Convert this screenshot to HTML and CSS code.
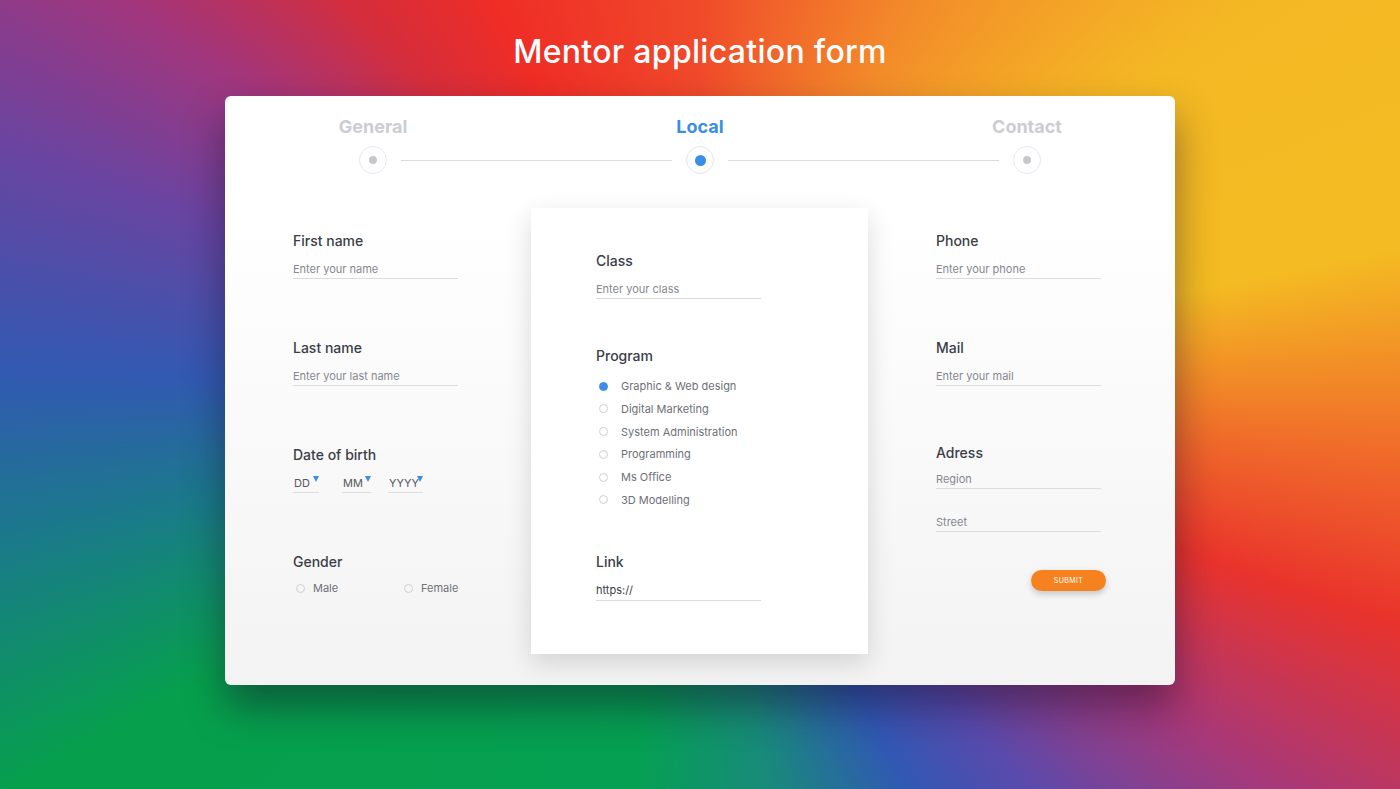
FILE: index.html
```html
<!DOCTYPE html>
<html lang="en">
<head>
    <meta charset="UTF-8">
    <meta name="viewport" content="width=device-width, initial-scale=1.0">
    <title>Mentor application form</title>
    <link rel="stylesheet" href="styles.css">
</head>
<body>

    <h1>Mentor application form</h1>

    <div class="card">
        <div class="steps">
            <div class="step">
                <span class="step-label">General</span>
                <span class="step-dot"><i></i></span>
            </div>
            <div class="step-line"></div>
            <div class="step active">
                <span class="step-label">Local</span>
                <span class="step-dot"><i></i></span>
            </div>
            <div class="step-line"></div>
            <div class="step">
                <span class="step-label">Contact</span>
                <span class="step-dot"><i></i></span>
            </div>
        </div>

        <div class="form-body">
            <!-- left column -->
            <div class="col col-left">
                <div class="field">
                    <label>First name</label>
                    <div class="input">Enter your name</div>
                </div>
                <div class="field">
                    <label>Last name</label>
                    <div class="input">Enter your last name</div>
                </div>
                <div class="field">
                    <label>Date of birth</label>
                    <div class="dates">
                        <span class="select dd">DD<b></b></span>
                        <span class="select mm">MM<b></b></span>
                        <span class="select yy">YYYY<b></b></span>
                    </div>
                </div>
                <div class="field">
                    <label>Gender</label>
                    <div class="gender">
                        <span class="radio"><i></i>Male</span>
                        <span class="radio"><i></i>Female</span>
                    </div>
                </div>
            </div>

            <!-- center panel -->
            <div class="col col-center">
                <div class="field">
                    <label>Class</label>
                    <div class="input">Enter your class</div>
                </div>
                <div class="field program">
                    <label>Program</label>
                    <ul class="options">
                        <li class="radio checked"><i></i>Graphic &amp; Web design</li>
                        <li class="radio"><i></i>Digital Marketing</li>
                        <li class="radio"><i></i>System Administration</li>
                        <li class="radio"><i></i>Programming</li>
                        <li class="radio"><i></i>Ms Office</li>
                        <li class="radio"><i></i>3D Modelling</li>
                    </ul>
                </div>
                <div class="field">
                    <label>Link</label>
                    <div class="input filled">https://</div>
                </div>
            </div>

            <!-- right column -->
            <div class="col col-right">
                <div class="field">
                    <label>Phone</label>
                    <div class="input">Enter your phone</div>
                </div>
                <div class="field">
                    <label>Mail</label>
                    <div class="input">Enter your mail</div>
                </div>
                <div class="field address">
                    <label>Adress</label>
                    <div class="input">Region</div>
                    <div class="input">Street</div>
                </div>
                <div class="submit-row">
                    <a class="submit">SUBMIT</a>
                </div>
            </div>
        </div>
    </div>

</body>
</html>
```

FILE: styles.css
```css
body {
    font-family: Inter, "Open Sans", sans-serif;
    margin: 0;
    padding: 0;
    height: 789px;
    overflow: hidden;
    display: flex;
    flex-direction: column;
    align-items: center;
    background: conic-gradient(from 0deg at 50% 50%,
        #f04a2a 0deg, #f3892a 28deg, #f4b824 55deg, #f4bc22 78deg,
        #f06a2a 95deg, #e9332c 108deg, #a83878 124deg, #5a4aac 140deg,
        #3158b4 152deg, #188a7a 170deg, #05a052 190deg, #06a04c 240deg,
        #1a7a8a 258deg, #3259b2 272deg, #6a44a0 290deg, #a0367e 304deg,
        #d42d3c 318deg, #ef2d26 332deg, #f04a2a 360deg);
}
h1 {
    color: #fff;
    font-size: 32px;
    font-weight: 500;
    line-height: 40px;
    margin: 32px 0 0;
    letter-spacing: 0.3px;
}
.card {
    width: 950px;
    height: 589px;
    margin-top: 24px;
    border-radius: 6px;
    background: linear-gradient(#ffffff 20%, #f3f3f3);
    box-shadow: 0 22px 40px rgba(20, 10, 40, 0.45);
    display: flex;
    flex-direction: column;
}

/* steps */
.steps {
    display: flex;
    flex: none;
    padding: 20px 134px 0;
    height: 112px;
    box-sizing: border-box;
}
.step {
    width: 28px;
    display: flex;
    flex-direction: column;
    align-items: center;
}
.step-label {
    font-size: 18px;
    font-weight: 700;
    line-height: 22px;
    color: #cbcdd2;
    white-space: nowrap;
    margin-bottom: 8px;
}
.step-dot {
    width: 28px;
    height: 28px;
    box-sizing: border-box;
    border: 1px solid #e6e8ee;
    border-radius: 50%;
    background: #fff;
    display: flex;
    align-items: center;
    justify-content: center;
}
.step-dot i {
    width: 8px;
    height: 8px;
    border-radius: 50%;
    background: #c6c8cd;
}
.step.active .step-label {
    color: #3a8ee6;
}
.step.active .step-dot i {
    width: 11px;
    height: 11px;
    background: #3a8ee6;
}
.step-line {
    flex: 1;
    height: 1px;
    background: #d9dbe1;
    margin: 44px 14px 0;
}

/* form */
.form-body {
    display: grid;
    grid-template-columns: 306px 337px 307px;
    grid-template-rows: minmax(0, 1fr);
    flex: 1;
    min-height: 0;
    padding-bottom: 31px;
}
.col {
    padding-left: 68px;
    padding-top: 24px;
    overflow: hidden;
}
.col-center {
    background: #fff;
    padding-left: 65px;
    padding-top: 44px;
    overflow: visible;
    box-shadow: 0 8px 24px rgba(0, 0, 0, 0.14);
}
.col-right {
    overflow: visible;
}
.field {
    width: 165px;
    margin-bottom: 60px;
}
.field label {
    display: block;
    font-size: 14px;
    line-height: 18px;
    font-weight: 500;
    color: #3b3e47;
    margin-bottom: 12px;
}
.input {
    font-size: 11px;
    line-height: 14px;
    color: #85888f;
    padding-bottom: 2px;
    border-bottom: 1px solid #dcdcdc;
}
.input.filled {
    color: #3b3e47;
    padding-bottom: 3px;
}

.dates {
    display: flex;
    gap: 23px;
}
.select {
    position: relative;
    font-size: 11px;
    line-height: 14px;
    color: #555860;
    padding: 0 0 2px 1px;
    border-bottom: 1px solid #dcdcdc;
}
.select.dd { width: 25px; }
.select.mm { width: 28px; }
.select.yy { width: 34px; margin-left: -6px; }
.select b {
    position: absolute;
    right: 0;
    top: 0;
    border-left: 3.5px solid transparent;
    border-right: 3.5px solid transparent;
    border-top: 6px solid #3a8ee6;
}

.gender {
    display: flex;
    margin-top: -2px;
    padding-left: 3px;
}
.gender .radio {
    flex: none;
}
.gender .radio:first-child {
    width: 108px;
}
.radio {
    display: flex;
    align-items: center;
    font-size: 11px;
    line-height: 14px;
    color: #6e7178;
}
.radio i {
    flex: none;
    width: 9px;
    height: 9px;
    box-sizing: border-box;
    border: 1px solid #cfd0d3;
    border-radius: 50%;
    margin-right: 8px;
}
.radio.checked i {
    background: #3a8ee6;
    border-color: #3a8ee6;
}

.program {
    margin-top: -12px;
    margin-bottom: 46px;
}
.options {
    list-style: none;
    margin: 0;
    padding: 2px 0 0 3px;
    display: flex;
    flex-direction: column;
    gap: 8.8px;
}
.options .radio i {
    margin-right: 13px;
}

.address {
    margin-top: -2px;
}
.address label {
    margin-bottom: 10px;
}
.address .input + .input {
    margin-top: 26px;
}
.submit-row {
    width: 170px;
    display: flex;
    justify-content: flex-end;
    margin-top: -22px;
}
.submit {
    width: 75px;
    height: 21px;
    border-radius: 11px;
    background: #f5821f;
    color: #fff;
    font-size: 7px;
    line-height: 21px;
    text-align: center;
    letter-spacing: 0.4px;
    box-shadow: 0 3px 6px rgba(0, 0, 0, 0.2);
    cursor: pointer;
}
```
